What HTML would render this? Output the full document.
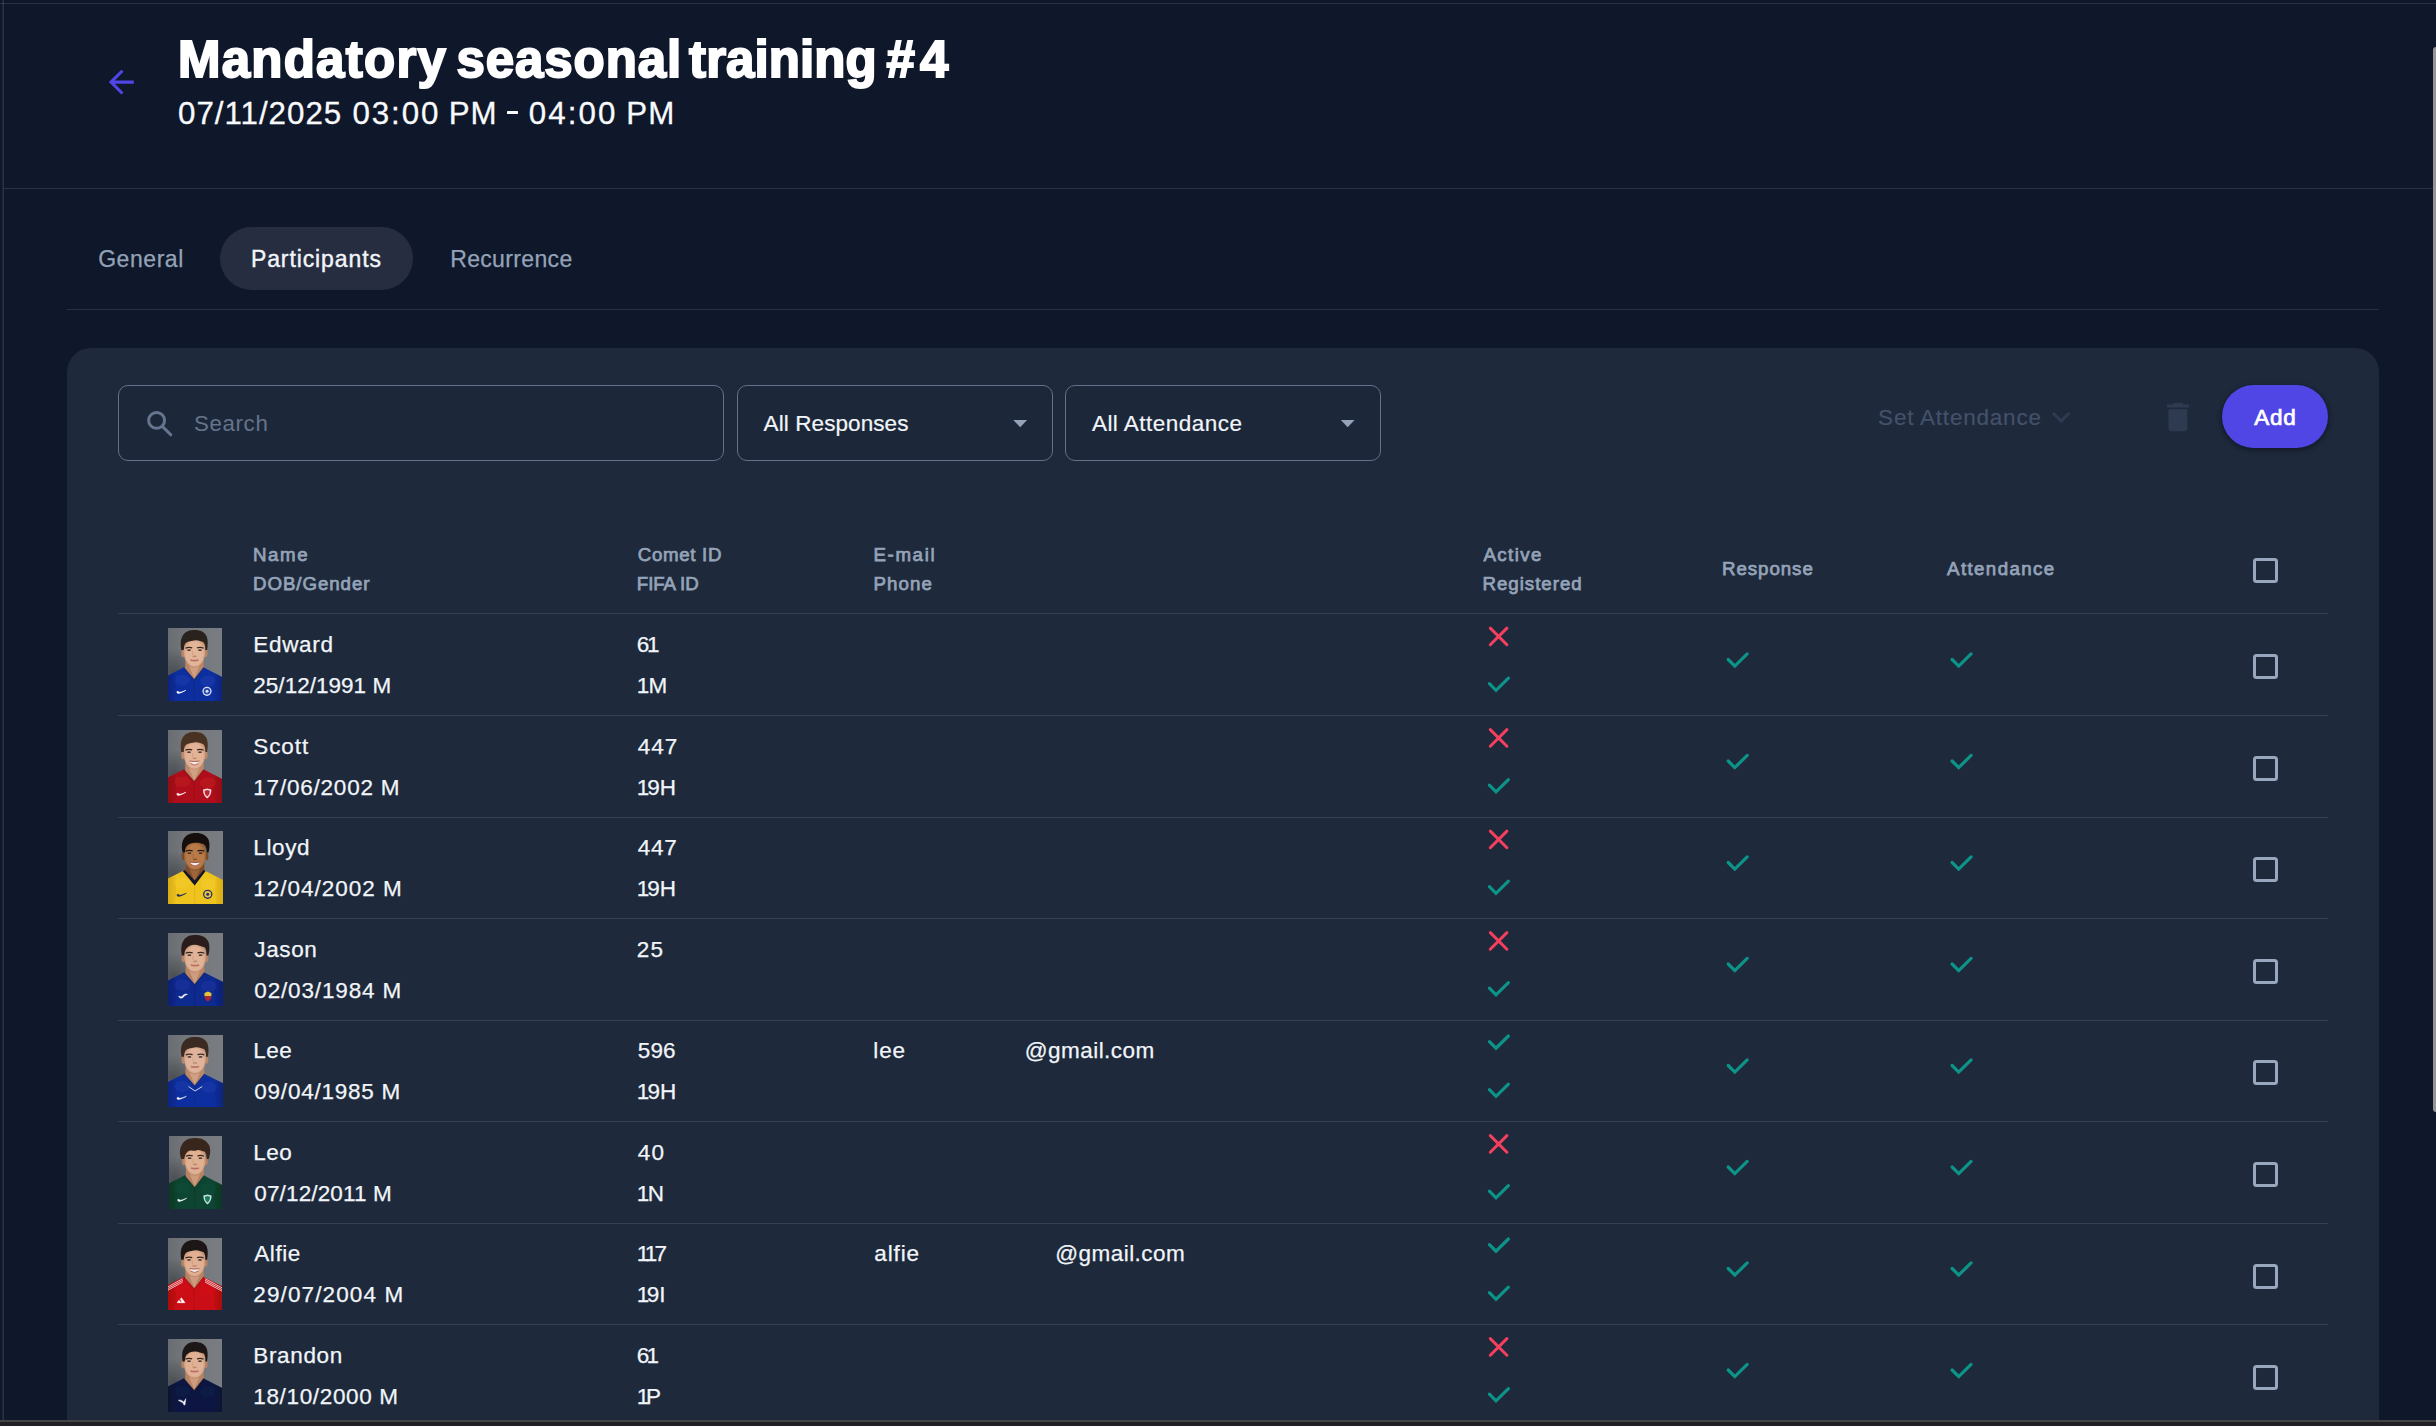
<!DOCTYPE html>
<html lang="en">
<head>
<meta charset="utf-8">
<title>Mandatory seasonal training #4</title>
<style>

*{box-sizing:border-box;margin:0;padding:0}
html,body{width:2436px;height:1426px;overflow:hidden;background:#0f172a}
body{position:relative;font-family:"Liberation Sans",sans-serif;color:#f1f5f9}
.abs,.t,svg.i{position:absolute}
.t{white-space:pre;line-height:1;display:block}
.ln{position:absolute;height:1px;background:#334155}
.frame-top{left:0;top:3px;width:2436px;height:1px;background:rgba(255,255,255,.115)}
.frame-left{left:2px;top:0;width:2px;height:1426px;background:linear-gradient(90deg,rgba(255,255,255,.06) 0,rgba(255,255,255,.06) 50%,rgba(255,255,255,.115) 50%)}
.hdr-line{left:4px;top:188px;width:2429px;height:1px;background:#2a3145}
.tab-line{left:67px;top:309px;width:2312px;height:1px;background:#2a3145}
.pill{left:220px;top:227px;width:193px;height:63px;border-radius:32px;background:#272d40}
.card{left:67px;top:348px;width:2312px;height:1100px;border-radius:24px;background:#1e293b}
.field{height:76px;top:385px;border:1px solid #62728b;border-radius:10px;background:#1c2739}
.btn{left:2222px;top:385px;width:106px;height:63px;border-radius:31.5px;background:#4f46e5;box-shadow:0 2px 4px rgba(8,12,24,.42),0 1px 7px rgba(8,12,24,.2)}
.cb{width:25px;height:25px;left:2253px;border:3px solid #98a6be;border-radius:3.5px}
.av{left:168px;width:54px;height:73px;overflow:hidden}
.bottombar{left:0;top:1420px;width:2436px;height:6px;background:#201f24;border-top:2px solid #454447}
.sb{left:2433px;top:47px;width:4px;height:1065px;background:#959595;border-radius:3px 0 0 3px}

</style>
</head>
<body>
<!-- static shapes: frame lines, card, fields, row rules, checkboxes, icons, avatars -->
<div class="abs frame-top"></div><div class="abs frame-left"></div>
<div class="abs hdr-line"></div><div class="abs tab-line"></div>
<div class="abs" style="left:507px;top:111.2px;width:11px;height:2.6px;background:#f8fafc;border-radius:.5px"></div>
<div class="abs pill"></div>
<div class="abs card"></div>
<div class="abs field" style="left:118px;width:606px"></div>
<div class="abs field" style="left:737px;width:316px"></div>
<div class="abs field" style="left:1065px;width:316px"></div>
<div class="abs btn"></div>
<div class="ln" style="left:118px;top:613px;width:2210px"></div>
<div class="ln" style="left:118px;top:715px;width:2210px"></div>
<div class="ln" style="left:118px;top:817px;width:2210px"></div>
<div class="ln" style="left:118px;top:918px;width:2210px"></div>
<div class="ln" style="left:118px;top:1020px;width:2210px"></div>
<div class="ln" style="left:118px;top:1121px;width:2210px"></div>
<div class="ln" style="left:118px;top:1223px;width:2210px"></div>
<div class="ln" style="left:118px;top:1324px;width:2210px"></div>
<div class="abs cb" style="top:558px"></div>
<div class="abs cb" style="top:654px"></div>
<div class="abs cb" style="top:756px"></div>
<div class="abs cb" style="top:857px"></div>
<div class="abs cb" style="top:959px"></div>
<div class="abs cb" style="top:1060px"></div>
<div class="abs cb" style="top:1162px"></div>
<div class="abs cb" style="top:1264px"></div>
<div class="abs cb" style="top:1365px"></div>
<svg class="i" style="left:0;top:0" width="2436" height="1426" viewBox="0 0 2436 1426"><g transform="translate(102.6 63.4) scale(1.56)" fill="#4f46e5"><path d="M20 11H7.83l5.59-5.59L12 4l-8 8 8 8 1.41-1.41L7.83 13H20v-2z"/></g><g fill="none" stroke="#66758f" stroke-width="3" stroke-linecap="round"><circle cx="156.6" cy="420.4" r="7.95"/><path d="M162.6 426.6L170.8 434.8"/></g><path d="M1013.3 420h13.8l-6.9 7.3z" fill="#94a3b8"/><path d="M1340.8 420h13.8l-6.9 7.3z" fill="#94a3b8"/><g transform="translate(2042.45 398.3) scale(1.56)" fill="#2e3a50"><path d="M16.59 8.59L12 13.17 7.41 8.59 6 10l6 6 6-6z"/></g><g transform="translate(2159.05 398.15) scale(1.572)" fill="#2e3a50"><path d="M6 19c0 1.1.9 2 2 2h8c1.1 0 2-.9 2-2V7H6v12zM19 4h-3.5l-1-1h-5l-1 1H5v2h14V4z"/></g><path d="M1490.3 628.1L1506.9 644.7M1506.9 628.1L1490.3 644.7" fill="none" stroke="#f43f5e" stroke-width="3" stroke-linecap="round"/><polyline points="1489.40,683.70 1496.00,690.30 1508.40,678.10" fill="none" stroke="#0d9488" stroke-width="3.2" stroke-linecap="round" stroke-linejoin="miter"/><polyline points="1728.20,659.50 1734.80,666.10 1747.20,653.90" fill="none" stroke="#0d9488" stroke-width="3.2" stroke-linecap="round" stroke-linejoin="miter"/><polyline points="1952.10,659.50 1958.70,666.10 1971.10,653.90" fill="none" stroke="#0d9488" stroke-width="3.2" stroke-linecap="round" stroke-linejoin="miter"/><path d="M1490.3 729.6L1506.9 746.2M1506.9 729.6L1490.3 746.2" fill="none" stroke="#f43f5e" stroke-width="3" stroke-linecap="round"/><polyline points="1489.40,785.20 1496.00,791.80 1508.40,779.60" fill="none" stroke="#0d9488" stroke-width="3.2" stroke-linecap="round" stroke-linejoin="miter"/><polyline points="1728.20,761.00 1734.80,767.60 1747.20,755.40" fill="none" stroke="#0d9488" stroke-width="3.2" stroke-linecap="round" stroke-linejoin="miter"/><polyline points="1952.10,761.00 1958.70,767.60 1971.10,755.40" fill="none" stroke="#0d9488" stroke-width="3.2" stroke-linecap="round" stroke-linejoin="miter"/><path d="M1490.3 831.1L1506.9 847.7M1506.9 831.1L1490.3 847.7" fill="none" stroke="#f43f5e" stroke-width="3" stroke-linecap="round"/><polyline points="1489.40,886.70 1496.00,893.30 1508.40,881.10" fill="none" stroke="#0d9488" stroke-width="3.2" stroke-linecap="round" stroke-linejoin="miter"/><polyline points="1728.20,862.50 1734.80,869.10 1747.20,856.90" fill="none" stroke="#0d9488" stroke-width="3.2" stroke-linecap="round" stroke-linejoin="miter"/><polyline points="1952.10,862.50 1958.70,869.10 1971.10,856.90" fill="none" stroke="#0d9488" stroke-width="3.2" stroke-linecap="round" stroke-linejoin="miter"/><path d="M1490.3 932.6L1506.9 949.2M1506.9 932.6L1490.3 949.2" fill="none" stroke="#f43f5e" stroke-width="3" stroke-linecap="round"/><polyline points="1489.40,988.20 1496.00,994.80 1508.40,982.60" fill="none" stroke="#0d9488" stroke-width="3.2" stroke-linecap="round" stroke-linejoin="miter"/><polyline points="1728.20,964.00 1734.80,970.60 1747.20,958.40" fill="none" stroke="#0d9488" stroke-width="3.2" stroke-linecap="round" stroke-linejoin="miter"/><polyline points="1952.10,964.00 1958.70,970.60 1971.10,958.40" fill="none" stroke="#0d9488" stroke-width="3.2" stroke-linecap="round" stroke-linejoin="miter"/><polyline points="1489.40,1041.60 1496.00,1048.20 1508.40,1036.00" fill="none" stroke="#0d9488" stroke-width="3.2" stroke-linecap="round" stroke-linejoin="miter"/><polyline points="1489.40,1089.70 1496.00,1096.30 1508.40,1084.10" fill="none" stroke="#0d9488" stroke-width="3.2" stroke-linecap="round" stroke-linejoin="miter"/><polyline points="1728.20,1065.50 1734.80,1072.10 1747.20,1059.90" fill="none" stroke="#0d9488" stroke-width="3.2" stroke-linecap="round" stroke-linejoin="miter"/><polyline points="1952.10,1065.50 1958.70,1072.10 1971.10,1059.90" fill="none" stroke="#0d9488" stroke-width="3.2" stroke-linecap="round" stroke-linejoin="miter"/><path d="M1490.3 1135.6L1506.9 1152.2M1506.9 1135.6L1490.3 1152.2" fill="none" stroke="#f43f5e" stroke-width="3" stroke-linecap="round"/><polyline points="1489.40,1191.20 1496.00,1197.80 1508.40,1185.60" fill="none" stroke="#0d9488" stroke-width="3.2" stroke-linecap="round" stroke-linejoin="miter"/><polyline points="1728.20,1167.00 1734.80,1173.60 1747.20,1161.40" fill="none" stroke="#0d9488" stroke-width="3.2" stroke-linecap="round" stroke-linejoin="miter"/><polyline points="1952.10,1167.00 1958.70,1173.60 1971.10,1161.40" fill="none" stroke="#0d9488" stroke-width="3.2" stroke-linecap="round" stroke-linejoin="miter"/><polyline points="1489.40,1244.60 1496.00,1251.20 1508.40,1239.00" fill="none" stroke="#0d9488" stroke-width="3.2" stroke-linecap="round" stroke-linejoin="miter"/><polyline points="1489.40,1292.70 1496.00,1299.30 1508.40,1287.10" fill="none" stroke="#0d9488" stroke-width="3.2" stroke-linecap="round" stroke-linejoin="miter"/><polyline points="1728.20,1268.50 1734.80,1275.10 1747.20,1262.90" fill="none" stroke="#0d9488" stroke-width="3.2" stroke-linecap="round" stroke-linejoin="miter"/><polyline points="1952.10,1268.50 1958.70,1275.10 1971.10,1262.90" fill="none" stroke="#0d9488" stroke-width="3.2" stroke-linecap="round" stroke-linejoin="miter"/><path d="M1490.3 1338.6L1506.9 1355.2M1506.9 1338.6L1490.3 1355.2" fill="none" stroke="#f43f5e" stroke-width="3" stroke-linecap="round"/><polyline points="1489.40,1394.20 1496.00,1400.80 1508.40,1388.60" fill="none" stroke="#0d9488" stroke-width="3.2" stroke-linecap="round" stroke-linejoin="miter"/><polyline points="1728.20,1370.00 1734.80,1376.60 1747.20,1364.40" fill="none" stroke="#0d9488" stroke-width="3.2" stroke-linecap="round" stroke-linejoin="miter"/><polyline points="1952.10,1370.00 1958.70,1376.60 1971.10,1364.40" fill="none" stroke="#0d9488" stroke-width="3.2" stroke-linecap="round" stroke-linejoin="miter"/></svg>
<div class="abs av" style="left:168px;top:628px;width:54px;height:73px"><svg width="54" height="73" viewBox="0 0 54 73" preserveAspectRatio="none" style="display:block"><defs><linearGradient id="bg0" x1="0" y1="0" x2="1" y2="0"><stop offset="0" stop-color="#686b70"/><stop offset=".3" stop-color="#727579"/><stop offset="1" stop-color="#7a7d82"/></linearGradient><radialGradient id="sd0" gradientUnits="userSpaceOnUse" cx="6" cy="44" r="24"><stop offset="0" stop-color="#3c3f43" stop-opacity=".7"/><stop offset=".55" stop-color="#3c3f43" stop-opacity=".32"/><stop offset="1" stop-color="#3c3f43" stop-opacity="0"/></radialGradient><radialGradient id="sk0" cx=".5" cy=".55" r=".62"><stop offset="0" stop-color="#e2b498"/><stop offset=".62" stop-color="#e2b498"/><stop offset="1" stop-color="#b98567"/></radialGradient><linearGradient id="sh0" x1="0" y1="0" x2="1" y2="0"><stop offset="0" stop-color="#081f72"/><stop offset=".16" stop-color="#0d2f9e"/><stop offset=".5" stop-color="#0d2f9e"/><stop offset=".84" stop-color="#0d2f9e"/><stop offset="1" stop-color="#081f72"/></linearGradient><filter id="bl0" x="-10%" y="-10%" width="120%" height="120%"><feGaussianBlur stdDeviation=".7"/></filter><filter id="bs0" x="-20%" y="-20%" width="140%" height="140%"><feGaussianBlur stdDeviation=".4"/></filter></defs><rect x="-2" y="-2" width="58" height="77" fill="url(#bg0)"/><rect x="-2" y="14" width="34" height="40" fill="url(#sd0)"/><g filter="url(#bl0)"><path d="M17.4 31 L17.2 41 L26.2 52.2 L35.8 41 L35.6 31z" fill="#b98567"/><path d="M21 38 L26.3 50.5 L31.6 38z" fill="#e2b498" opacity=".55"/><path d="M-4 49.6 L15.6 39.5 L26.2 51.8 L35.8 39.5 L58 51 L58 80 L-4 80z" fill="url(#sh0)"/><path d="M-4 49.6 L6.5 44.4 C8.5 52 8.5 62 5.5 80 L-4 80z" fill="#081f72" opacity=".28"/><path d="M58 51 L47.5 45.6 C45.5 53 45.8 63 48.6 80 L58 80z" fill="#081f72" opacity=".28"/><ellipse cx="14" cy="52" rx="8" ry="5.5" fill="#2246bd" opacity=".28"/><ellipse cx="40" cy="53" rx="8" ry="5.5" fill="#2246bd" opacity=".28"/><path d="M26.2 52 L26.4 80" stroke="#081f72" stroke-width=".9" opacity=".5"/><path d="M15.6 39.5 L26.2 51.8 L35.8 39.5" fill="none" stroke="#081f72" stroke-width="1.1" opacity=".7"/><ellipse cx="14.9" cy="25.2" rx="1.6" ry="4" fill="#b98567"/><ellipse cx="38" cy="25.2" rx="1.6" ry="4" fill="#b98567"/><path d="M15.8 20 C15.6 12 20 9.3 26.5 9.3 C33 9.3 37.4 12 37.2 20 L37.2 25.4 C37 30 35 34.2 31.6 37.2 C29 39.5 24 39.5 21.4 37.2 C18 34.2 16 30 15.8 25.4 Z" fill="url(#sk0)"/><path d="M13.3 22 C12.4 17 12.4 11 14.8 7.5 C17.8 3 22.5 1.9 27 2.1 C32 2.1 37 4 38.9 9 C40.2 13 39.8 18 39.1 22 L37.3 22 C37.6 18.5 37 15.8 35.4 14.2 C32.2 13.4 30 11.6 26 12.6 C22 13.3 19.2 13.6 17.3 15.6 C16.1 17.6 15.9 19.6 15.7 22 Z" fill="#2b211d"/></g><g filter="url(#bs0)"><path d="M17.4 20.3 Q20.6 18.6 24.2 19.9 M29 19.9 Q32.6 18.6 35.6 20.3" stroke="#241813" stroke-width="1.25" fill="none" opacity=".9"/><ellipse cx="21" cy="22.2" rx="1.9" ry=".9" fill="#2c201c" opacity=".8"/><ellipse cx="32" cy="22.2" rx="1.9" ry=".9" fill="#2c201c" opacity=".8"/><ellipse cx="26.6" cy="28.3" rx="2.3" ry=".85" fill="#b98567" opacity=".85"/><path d="M24.7 23 L24.5 27" stroke="#b98567" stroke-width="1.1" opacity=".35"/><path d="M22.4 32 Q26.5 33.2 30.6 32" stroke="#b2655f" stroke-width="1.7" fill="none" opacity=".9"/><path d="M20.5 37.4 Q26.5 41.2 32.5 37.4" stroke="#b98567" stroke-width="1" fill="none" opacity=".7"/><path d="M8.9 63.6 C8.6 66.4 11.5 65.9 18 62.2 C12.8 64.4 10.6 64.8 10.2 63.2z" fill="#ffffff" stroke="#ffffff" stroke-width=".5"/><circle cx="39" cy="63.3" r="4.6" fill="#d9e2f2"/><circle cx="39" cy="63.3" r="3.3" fill="#2546ad"/><circle cx="39" cy="63.3" r="1.5" fill="#d9e2f2"/></g></svg></div>
<div class="abs av" style="left:168px;top:730px;width:54px;height:73px"><svg width="54" height="73" viewBox="0 0 54 73" preserveAspectRatio="none" style="display:block"><defs><linearGradient id="bg1" x1="0" y1="0" x2="1" y2="0"><stop offset="0" stop-color="#686b70"/><stop offset=".3" stop-color="#727579"/><stop offset="1" stop-color="#7a7d82"/></linearGradient><radialGradient id="sd1" gradientUnits="userSpaceOnUse" cx="6" cy="44" r="24"><stop offset="0" stop-color="#3c3f43" stop-opacity=".7"/><stop offset=".55" stop-color="#3c3f43" stop-opacity=".32"/><stop offset="1" stop-color="#3c3f43" stop-opacity="0"/></radialGradient><radialGradient id="sk1" cx=".5" cy=".55" r=".62"><stop offset="0" stop-color="#e4b397"/><stop offset=".62" stop-color="#e4b397"/><stop offset="1" stop-color="#bd876a"/></radialGradient><linearGradient id="sh1" x1="0" y1="0" x2="1" y2="0"><stop offset="0" stop-color="#860b13"/><stop offset=".16" stop-color="#b0101a"/><stop offset=".5" stop-color="#b0101a"/><stop offset=".84" stop-color="#b0101a"/><stop offset="1" stop-color="#860b13"/></linearGradient><filter id="bl1" x="-10%" y="-10%" width="120%" height="120%"><feGaussianBlur stdDeviation=".7"/></filter><filter id="bs1" x="-20%" y="-20%" width="140%" height="140%"><feGaussianBlur stdDeviation=".4"/></filter></defs><rect x="-2" y="-2" width="58" height="77" fill="url(#bg1)"/><rect x="-2" y="14" width="34" height="40" fill="url(#sd1)"/><g filter="url(#bl1)"><path d="M17.4 31 L17.2 41 L26.2 52.2 L35.8 41 L35.6 31z" fill="#bd876a"/><path d="M21 38 L26.3 50.5 L31.6 38z" fill="#e4b397" opacity=".55"/><path d="M-4 49.6 L15.6 39.5 L26.2 51.8 L35.8 39.5 L58 51 L58 80 L-4 80z" fill="url(#sh1)"/><path d="M-4 49.6 L6.5 44.4 C8.5 52 8.5 62 5.5 80 L-4 80z" fill="#860b13" opacity=".28"/><path d="M58 51 L47.5 45.6 C45.5 53 45.8 63 48.6 80 L58 80z" fill="#860b13" opacity=".28"/><ellipse cx="14" cy="52" rx="8" ry="5.5" fill="#c91f27" opacity=".28"/><ellipse cx="40" cy="53" rx="8" ry="5.5" fill="#c91f27" opacity=".28"/><path d="M26.2 52 L26.4 80" stroke="#860b13" stroke-width=".9" opacity=".5"/><path d="M15.6 39.5 L26.2 51.8 L35.8 39.5" fill="none" stroke="#860b13" stroke-width="1.1" opacity=".7"/><ellipse cx="14.9" cy="25.2" rx="1.6" ry="4" fill="#bd876a"/><ellipse cx="38" cy="25.2" rx="1.6" ry="4" fill="#bd876a"/><path d="M15.8 20 C15.6 12 20 9.3 26.5 9.3 C33 9.3 37.4 12 37.2 20 L37.2 25.4 C37 30 35 34.2 31.6 37.2 C29 39.5 24 39.5 21.4 37.2 C18 34.2 16 30 15.8 25.4 Z" fill="url(#sk1)"/><path d="M13.3 22 C12.4 17 12.4 11 14.8 7.5 C17.8 3 22.5 1.9 27 2.1 C32 2.1 37 4 38.9 9 C40.2 13 39.8 18 39.1 22 L37.3 22 C37.6 18.5 37 15.8 35.4 14.2 C32.2 13.4 30 11.6 26 12.6 C22 13.3 19.2 13.6 17.3 15.6 C16.1 17.6 15.9 19.6 15.7 22 Z" fill="#4a3224"/></g><g filter="url(#bs1)"><path d="M17.4 20.3 Q20.6 18.6 24.2 19.9 M29 19.9 Q32.6 18.6 35.6 20.3" stroke="#241813" stroke-width="1.25" fill="none" opacity=".9"/><ellipse cx="21" cy="22.2" rx="1.9" ry=".9" fill="#2c201c" opacity=".8"/><ellipse cx="32" cy="22.2" rx="1.9" ry=".9" fill="#2c201c" opacity=".8"/><ellipse cx="26.6" cy="28.3" rx="2.3" ry=".85" fill="#bd876a" opacity=".85"/><path d="M24.7 23 L24.5 27" stroke="#bd876a" stroke-width="1.1" opacity=".35"/><path d="M21.9 31.2 Q26.5 32.2 31.1 31.2 Q29.4 35 26.5 35 Q23.6 35 21.9 31.2z" fill="#f4ecea"/><path d="M21.6 31 Q26.5 32.1 31.4 31" stroke="#8e4a44" stroke-width=".8" fill="none"/><path d="M22.6 33.6 Q26.5 36.4 30.4 33.6" stroke="#a8605a" stroke-width=".9" fill="none"/><path d="M20.5 37.4 Q26.5 41.2 32.5 37.4" stroke="#bd876a" stroke-width="1" fill="none" opacity=".7"/><path d="M8.9 63.6 C8.6 66.4 11.5 65.9 18 62.2 C12.8 64.4 10.6 64.8 10.2 63.2z" fill="#ffffff" stroke="#ffffff" stroke-width=".5"/><path d="M35 59.6 L39.2 58.4 L43.4 59.6 C43.4 63.8 42 66.6 39.2 68.4 C36.4 66.6 35 63.8 35 59.6z" fill="#f0dfe0"/><path d="M36.6 60.8 L39.2 60 L41.8 60.8 C41.8 63.6 41 65.4 39.2 66.6 C37.4 65.4 36.6 63.6 36.6 60.8z" fill="#c2262e"/></g></svg></div>
<div class="abs av" style="left:168px;top:831px;width:55px;height:73px"><svg width="55" height="73" viewBox="0 0 54 73" preserveAspectRatio="none" style="display:block"><defs><linearGradient id="bg2" x1="0" y1="0" x2="1" y2="0"><stop offset="0" stop-color="#686b70"/><stop offset=".3" stop-color="#727579"/><stop offset="1" stop-color="#7a7d82"/></linearGradient><radialGradient id="sd2" gradientUnits="userSpaceOnUse" cx="6" cy="44" r="24"><stop offset="0" stop-color="#3c3f43" stop-opacity=".7"/><stop offset=".55" stop-color="#3c3f43" stop-opacity=".32"/><stop offset="1" stop-color="#3c3f43" stop-opacity="0"/></radialGradient><radialGradient id="sk2" cx=".5" cy=".55" r=".62"><stop offset="0" stop-color="#b97a48"/><stop offset=".62" stop-color="#b97a48"/><stop offset="1" stop-color="#7e4c2a"/></radialGradient><linearGradient id="sh2" x1="0" y1="0" x2="1" y2="0"><stop offset="0" stop-color="#cfa012"/><stop offset=".16" stop-color="#efc41f"/><stop offset=".5" stop-color="#efc41f"/><stop offset=".84" stop-color="#efc41f"/><stop offset="1" stop-color="#cfa012"/></linearGradient><filter id="bl2" x="-10%" y="-10%" width="120%" height="120%"><feGaussianBlur stdDeviation=".7"/></filter><filter id="bs2" x="-20%" y="-20%" width="140%" height="140%"><feGaussianBlur stdDeviation=".4"/></filter></defs><rect x="-2" y="-2" width="58" height="77" fill="url(#bg2)"/><rect x="-2" y="14" width="34" height="40" fill="url(#sd2)"/><g filter="url(#bl2)"><path d="M17.4 31 L17.2 41 L26.2 52.2 L35.8 41 L35.6 31z" fill="#7e4c2a"/><path d="M21 38 L26.3 50.5 L31.6 38z" fill="#b97a48" opacity=".55"/><path d="M-4 49.6 L15.6 39.5 L26.2 51.8 L35.8 39.5 L58 51 L58 80 L-4 80z" fill="url(#sh2)"/><path d="M-4 49.6 L6.5 44.4 C8.5 52 8.5 62 5.5 80 L-4 80z" fill="#cfa012" opacity=".28"/><path d="M58 51 L47.5 45.6 C45.5 53 45.8 63 48.6 80 L58 80z" fill="#cfa012" opacity=".28"/><ellipse cx="14" cy="52" rx="8" ry="5.5" fill="#f7d540" opacity=".28"/><ellipse cx="40" cy="53" rx="8" ry="5.5" fill="#f7d540" opacity=".28"/><path d="M26.2 52 L26.4 80" stroke="#cfa012" stroke-width=".9" opacity=".5"/><path d="M14.4 39.9 L26.2 54.4 L37 39.9 L34.9 38.9 L26.2 49.6 L16.6 38.9z" fill="#14182a"/><ellipse cx="14.9" cy="25.2" rx="1.6" ry="4" fill="#7e4c2a"/><ellipse cx="38" cy="25.2" rx="1.6" ry="4" fill="#7e4c2a"/><path d="M15.8 20 C15.6 12 20 9.3 26.5 9.3 C33 9.3 37.4 12 37.2 20 L37.2 25.4 C37 30 35 34.2 31.6 37.2 C29 39.5 24 39.5 21.4 37.2 C18 34.2 16 30 15.8 25.4 Z" fill="url(#sk2)"/><path d="M14.4 21.5 C13.2 17 13.2 11 15.8 7.2 C18.6 3 23.4 1.8 28 1.9 C33 1.9 38 4 39.9 9 C41.2 13 40.8 17.6 39.8 21.5 L38 21.5 C38 18.4 37.4 15.6 35.6 13.6 C32.6 12 29.6 11.6 26.8 11.8 C23.4 12 20.4 12.8 18.6 14.8 C16.8 16.8 16.8 19 16.6 21.5 Z" fill="#14100e"/></g><g filter="url(#bs2)"><path d="M17.4 20.3 Q20.6 18.6 24.2 19.9 M29 19.9 Q32.6 18.6 35.6 20.3" stroke="#120c09" stroke-width="1.25" fill="none" opacity=".9"/><ellipse cx="21" cy="22.2" rx="1.9" ry=".9" fill="#2c201c" opacity=".8"/><ellipse cx="32" cy="22.2" rx="1.9" ry=".9" fill="#2c201c" opacity=".8"/><ellipse cx="26.6" cy="28.3" rx="2.3" ry=".85" fill="#7e4c2a" opacity=".85"/><path d="M24.7 23 L24.5 27" stroke="#7e4c2a" stroke-width="1.1" opacity=".35"/><path d="M21.9 31.2 Q26.5 32.2 31.1 31.2 Q29.4 35 26.5 35 Q23.6 35 21.9 31.2z" fill="#f4ecea"/><path d="M21.6 31 Q26.5 32.1 31.4 31" stroke="#8e4a44" stroke-width=".8" fill="none"/><path d="M22.6 33.6 Q26.5 36.4 30.4 33.6" stroke="#a8605a" stroke-width=".9" fill="none"/><path d="M20.5 37.4 Q26.5 41.2 32.5 37.4" stroke="#7e4c2a" stroke-width="1" fill="none" opacity=".7"/><path d="M8.9 63.6 C8.6 66.4 11.5 65.9 18 62.2 C12.8 64.4 10.6 64.8 10.2 63.2z" fill="#1d2a5a" stroke="#1d2a5a" stroke-width=".5"/><circle cx="39" cy="63.3" r="4.6" fill="#27306a"/><circle cx="39" cy="63.3" r="3.3" fill="#e9c83a"/><circle cx="39" cy="63.3" r="1.5" fill="#27306a"/></g></svg></div>
<div class="abs av" style="left:168px;top:933px;width:55px;height:73px"><svg width="55" height="73" viewBox="0 0 54 73" preserveAspectRatio="none" style="display:block"><defs><linearGradient id="bg3" x1="0" y1="0" x2="1" y2="0"><stop offset="0" stop-color="#686b70"/><stop offset=".3" stop-color="#727579"/><stop offset="1" stop-color="#7a7d82"/></linearGradient><radialGradient id="sd3" gradientUnits="userSpaceOnUse" cx="6" cy="44" r="24"><stop offset="0" stop-color="#3c3f43" stop-opacity=".7"/><stop offset=".55" stop-color="#3c3f43" stop-opacity=".32"/><stop offset="1" stop-color="#3c3f43" stop-opacity="0"/></radialGradient><radialGradient id="sk3" cx=".5" cy=".55" r=".62"><stop offset="0" stop-color="#e0b296"/><stop offset=".62" stop-color="#e0b296"/><stop offset="1" stop-color="#b78365"/></radialGradient><linearGradient id="sh3" x1="0" y1="0" x2="1" y2="0"><stop offset="0" stop-color="#0a1c6b"/><stop offset=".16" stop-color="#11298f"/><stop offset=".5" stop-color="#11298f"/><stop offset=".84" stop-color="#11298f"/><stop offset="1" stop-color="#0a1c6b"/></linearGradient><filter id="bl3" x="-10%" y="-10%" width="120%" height="120%"><feGaussianBlur stdDeviation=".7"/></filter><filter id="bs3" x="-20%" y="-20%" width="140%" height="140%"><feGaussianBlur stdDeviation=".4"/></filter></defs><rect x="-2" y="-2" width="58" height="77" fill="url(#bg3)"/><rect x="-2" y="14" width="34" height="40" fill="url(#sd3)"/><g filter="url(#bl3)"><path d="M17.4 31 L17.2 41 L26.2 52.2 L35.8 41 L35.6 31z" fill="#b78365"/><path d="M21 38 L26.3 50.5 L31.6 38z" fill="#e0b296" opacity=".55"/><path d="M-4 49.6 L15.6 39.5 L26.2 51.8 L35.8 39.5 L58 51 L58 80 L-4 80z" fill="url(#sh3)"/><path d="M-4 49.6 L6.5 44.4 C8.5 52 8.5 62 5.5 80 L-4 80z" fill="#0a1c6b" opacity=".28"/><path d="M58 51 L47.5 45.6 C45.5 53 45.8 63 48.6 80 L58 80z" fill="#0a1c6b" opacity=".28"/><ellipse cx="14" cy="52" rx="8" ry="5.5" fill="#1f3cab" opacity=".28"/><ellipse cx="40" cy="53" rx="8" ry="5.5" fill="#1f3cab" opacity=".28"/><path d="M26.2 52 L26.4 80" stroke="#0a1c6b" stroke-width=".9" opacity=".5"/><path d="M15.6 39.5 L26.2 51.8 L35.8 39.5" fill="none" stroke="#0a1c6b" stroke-width="1.1" opacity=".7"/><ellipse cx="14.9" cy="25.2" rx="1.6" ry="4" fill="#b78365"/><ellipse cx="38" cy="25.2" rx="1.6" ry="4" fill="#b78365"/><path d="M15.8 20 C15.6 12 20 9.3 26.5 9.3 C33 9.3 37.4 12 37.2 20 L37.2 25.4 C37 30 35 34.2 31.6 37.2 C29 39.5 24 39.5 21.4 37.2 C18 34.2 16 30 15.8 25.4 Z" fill="url(#sk3)"/><path d="M13.6 22.5 C12.6 17 12.8 11 15.4 7.3 C18.2 3 23 1.9 27.5 2.1 C32.8 2.1 38.2 4.4 40 9.6 C41.2 13.6 40.6 18.4 39.6 22.5 L37.8 22.5 C38 18.6 37.6 16 36.2 14.4 C33 14 30.4 12 27 11.8 C23 11.6 20 13.2 18 15.6 C16.4 17.6 16.2 19.8 16 22.5 Z" fill="#2a1f1b"/></g><g filter="url(#bs3)"><path d="M17.4 20.3 Q20.6 18.6 24.2 19.9 M29 19.9 Q32.6 18.6 35.6 20.3" stroke="#241813" stroke-width="1.25" fill="none" opacity=".9"/><ellipse cx="21" cy="22.2" rx="1.9" ry=".9" fill="#2c201c" opacity=".8"/><ellipse cx="32" cy="22.2" rx="1.9" ry=".9" fill="#2c201c" opacity=".8"/><ellipse cx="26.6" cy="28.3" rx="2.3" ry=".85" fill="#b78365" opacity=".85"/><path d="M24.7 23 L24.5 27" stroke="#b78365" stroke-width="1.1" opacity=".35"/><path d="M22.4 32 Q26.5 33.2 30.6 32" stroke="#b2655f" stroke-width="1.7" fill="none" opacity=".9"/><path d="M20.5 37.4 Q26.5 41.2 32.5 37.4" stroke="#b78365" stroke-width="1" fill="none" opacity=".7"/><path d="M10.6 63.2 C11.8 66.2 14.6 65.2 16 63 C16.8 61.8 18 61.6 19 61.4 C16.6 60.8 15.2 61.6 14.4 63 C13.6 64.2 12.4 64.4 10.6 63.2z" fill="#ffffff" stroke="#ffffff" stroke-width=".7"/><path d="M35.8 60 L39.2 58.6 L42.6 60 L42.6 63.2 L35.8 63.2z" fill="#e6c33a"/><path d="M35.8 63.2 L42.6 63.2 C42.4 65.6 41.2 67.4 39.2 68.4 C37.2 67.4 36 65.6 35.8 63.2z" fill="#b3202f"/></g></svg></div>
<div class="abs av" style="left:168px;top:1035px;width:55px;height:72px"><svg width="55" height="72" viewBox="0 0 54 73" preserveAspectRatio="none" style="display:block"><defs><linearGradient id="bg4" x1="0" y1="0" x2="1" y2="0"><stop offset="0" stop-color="#686b70"/><stop offset=".3" stop-color="#727579"/><stop offset="1" stop-color="#7a7d82"/></linearGradient><radialGradient id="sd4" gradientUnits="userSpaceOnUse" cx="6" cy="44" r="24"><stop offset="0" stop-color="#3c3f43" stop-opacity=".7"/><stop offset=".55" stop-color="#3c3f43" stop-opacity=".32"/><stop offset="1" stop-color="#3c3f43" stop-opacity="0"/></radialGradient><radialGradient id="sk4" cx=".5" cy=".55" r=".62"><stop offset="0" stop-color="#e0b49c"/><stop offset=".62" stop-color="#e0b49c"/><stop offset="1" stop-color="#b98869"/></radialGradient><linearGradient id="sh4" x1="0" y1="0" x2="1" y2="0"><stop offset="0" stop-color="#0a2176"/><stop offset=".16" stop-color="#102f9e"/><stop offset=".5" stop-color="#102f9e"/><stop offset=".84" stop-color="#102f9e"/><stop offset="1" stop-color="#0a2176"/></linearGradient><filter id="bl4" x="-10%" y="-10%" width="120%" height="120%"><feGaussianBlur stdDeviation=".7"/></filter><filter id="bs4" x="-20%" y="-20%" width="140%" height="140%"><feGaussianBlur stdDeviation=".4"/></filter></defs><rect x="-2" y="-2" width="58" height="77" fill="url(#bg4)"/><rect x="-2" y="14" width="34" height="40" fill="url(#sd4)"/><g filter="url(#bl4)"><path d="M17.4 31 L17.2 41 L26.2 52.2 L35.8 41 L35.6 31z" fill="#b98869"/><path d="M21 38 L26.3 50.5 L31.6 38z" fill="#e0b49c" opacity=".55"/><path d="M-4 49.6 L15.6 39.5 L26.2 51.8 L35.8 39.5 L58 51 L58 80 L-4 80z" fill="url(#sh4)"/><path d="M-4 49.6 L6.5 44.4 C8.5 52 8.5 62 5.5 80 L-4 80z" fill="#0a2176" opacity=".28"/><path d="M58 51 L47.5 45.6 C45.5 53 45.8 63 48.6 80 L58 80z" fill="#0a2176" opacity=".28"/><ellipse cx="14" cy="52" rx="8" ry="5.5" fill="#2145b8" opacity=".28"/><ellipse cx="40" cy="53" rx="8" ry="5.5" fill="#2145b8" opacity=".28"/><path d="M26.2 52 L26.4 80" stroke="#0a2176" stroke-width=".9" opacity=".5"/><path d="M15.6 39.5 L26.2 51.8 L35.8 39.5" fill="none" stroke="#0a2176" stroke-width="1.1" opacity=".7"/><path d="M20.2 52.2 L26.5 56.8 L33.6 52.2" fill="none" stroke="#e8ecf6" stroke-width=".9"/><ellipse cx="14.9" cy="25.2" rx="1.6" ry="4" fill="#b98869"/><ellipse cx="38" cy="25.2" rx="1.6" ry="4" fill="#b98869"/><path d="M15.8 20 C15.6 12 20 9.3 26.5 9.3 C33 9.3 37.4 12 37.2 20 L37.2 25.4 C37 30 35 34.2 31.6 37.2 C29 39.5 24 39.5 21.4 37.2 C18 34.2 16 30 15.8 25.4 Z" fill="url(#sk4)"/><path d="M13.3 22 C12.4 17 12.4 11 14.8 7.5 C17.8 3 22.5 1.9 27 2.1 C32 2.1 37 4 38.9 9 C40.2 13 39.8 18 39.1 22 L37.3 22 C37.6 18.5 37 15.8 35.4 14.2 C32.2 13.4 30 11.6 26 12.6 C22 13.3 19.2 13.6 17.3 15.6 C16.1 17.6 15.9 19.6 15.7 22 Z" fill="#3a2a20"/></g><g filter="url(#bs4)"><path d="M17.4 20.3 Q20.6 18.6 24.2 19.9 M29 19.9 Q32.6 18.6 35.6 20.3" stroke="#241813" stroke-width="1.25" fill="none" opacity=".9"/><ellipse cx="21" cy="22.2" rx="1.9" ry=".9" fill="#2c201c" opacity=".8"/><ellipse cx="32" cy="22.2" rx="1.9" ry=".9" fill="#2c201c" opacity=".8"/><ellipse cx="26.6" cy="28.3" rx="2.3" ry=".85" fill="#b98869" opacity=".85"/><path d="M24.7 23 L24.5 27" stroke="#b98869" stroke-width="1.1" opacity=".35"/><path d="M22.4 32 Q26.5 33.2 30.6 32" stroke="#b2655f" stroke-width="1.7" fill="none" opacity=".9"/><path d="M20.5 37.4 Q26.5 41.2 32.5 37.4" stroke="#b98869" stroke-width="1" fill="none" opacity=".7"/><path d="M8.9 63.6 C8.6 66.4 11.5 65.9 18 62.2 C12.8 64.4 10.6 64.8 10.2 63.2z" fill="#ffffff" stroke="#ffffff" stroke-width=".5"/></g></svg></div>
<div class="abs av" style="left:169px;top:1136px;width:53px;height:73px"><svg width="53" height="73" viewBox="0 0 54 73" preserveAspectRatio="none" style="display:block"><defs><linearGradient id="bg5" x1="0" y1="0" x2="1" y2="0"><stop offset="0" stop-color="#686b70"/><stop offset=".3" stop-color="#727579"/><stop offset="1" stop-color="#7a7d82"/></linearGradient><radialGradient id="sd5" gradientUnits="userSpaceOnUse" cx="6" cy="44" r="24"><stop offset="0" stop-color="#3c3f43" stop-opacity=".7"/><stop offset=".55" stop-color="#3c3f43" stop-opacity=".32"/><stop offset="1" stop-color="#3c3f43" stop-opacity="0"/></radialGradient><radialGradient id="sk5" cx=".5" cy=".55" r=".62"><stop offset="0" stop-color="#dfb092"/><stop offset=".62" stop-color="#dfb092"/><stop offset="1" stop-color="#b68263"/></radialGradient><linearGradient id="sh5" x1="0" y1="0" x2="1" y2="0"><stop offset="0" stop-color="#093322"/><stop offset=".16" stop-color="#0f4531"/><stop offset=".5" stop-color="#0f4531"/><stop offset=".84" stop-color="#0f4531"/><stop offset="1" stop-color="#093322"/></linearGradient><filter id="bl5" x="-10%" y="-10%" width="120%" height="120%"><feGaussianBlur stdDeviation=".7"/></filter><filter id="bs5" x="-20%" y="-20%" width="140%" height="140%"><feGaussianBlur stdDeviation=".4"/></filter></defs><rect x="-2" y="-2" width="58" height="77" fill="url(#bg5)"/><rect x="-2" y="14" width="34" height="40" fill="url(#sd5)"/><g filter="url(#bl5)"><path d="M17.4 31 L17.2 41 L26.2 52.2 L35.8 41 L35.6 31z" fill="#b68263"/><path d="M21 38 L26.3 50.5 L31.6 38z" fill="#dfb092" opacity=".55"/><path d="M-4 49.6 L15.6 39.5 L26.2 51.8 L35.8 39.5 L58 51 L58 80 L-4 80z" fill="url(#sh5)"/><path d="M-4 49.6 L6.5 44.4 C8.5 52 8.5 62 5.5 80 L-4 80z" fill="#093322" opacity=".28"/><path d="M58 51 L47.5 45.6 C45.5 53 45.8 63 48.6 80 L58 80z" fill="#093322" opacity=".28"/><ellipse cx="14" cy="52" rx="8" ry="5.5" fill="#185a41" opacity=".28"/><ellipse cx="40" cy="53" rx="8" ry="5.5" fill="#185a41" opacity=".28"/><path d="M26.2 52 L26.4 80" stroke="#093322" stroke-width=".9" opacity=".5"/><path d="M15.6 39.5 L26.2 51.8 L35.8 39.5" fill="none" stroke="#093322" stroke-width="1.1" opacity=".7"/><ellipse cx="14.9" cy="25.2" rx="1.6" ry="4" fill="#b68263"/><ellipse cx="38" cy="25.2" rx="1.6" ry="4" fill="#b68263"/><path d="M15.8 20 C15.6 12 20 9.3 26.5 9.3 C33 9.3 37.4 12 37.2 20 L37.2 25.4 C37 30 35 34.2 31.6 37.2 C29 39.5 24 39.5 21.4 37.2 C18 34.2 16 30 15.8 25.4 Z" fill="url(#sk5)"/><path d="M12.6 23 C10.8 19 10.4 13.4 12.8 9.2 C14.8 4.6 20 1.8 26.6 1.9 C33.6 1.9 39 4.6 41 9.6 C42.8 14 42 19.4 40.4 23 L38.4 23 C38.6 19.6 37.8 17 36.2 15.4 C33.6 15.6 31.6 13.4 28.4 14.2 C25.6 15.6 23.2 13.6 20.8 14.8 C18.4 15.6 17 17.6 16.4 19.6 C15.8 20.8 15.6 21.8 15.4 23 Z" fill="#38281d"/></g><g filter="url(#bs5)"><path d="M17.4 20.3 Q20.6 18.6 24.2 19.9 M29 19.9 Q32.6 18.6 35.6 20.3" stroke="#241813" stroke-width="1.25" fill="none" opacity=".9"/><ellipse cx="21" cy="22.2" rx="1.9" ry=".9" fill="#2c201c" opacity=".8"/><ellipse cx="32" cy="22.2" rx="1.9" ry=".9" fill="#2c201c" opacity=".8"/><ellipse cx="26.6" cy="28.3" rx="2.3" ry=".85" fill="#b68263" opacity=".85"/><path d="M24.7 23 L24.5 27" stroke="#b68263" stroke-width="1.1" opacity=".35"/><path d="M22.4 32 Q26.5 33.2 30.6 32" stroke="#b2655f" stroke-width="1.7" fill="none" opacity=".9"/><path d="M20.5 37.4 Q26.5 41.2 32.5 37.4" stroke="#b68263" stroke-width="1" fill="none" opacity=".7"/><path d="M8.9 63.6 C8.6 66.4 11.5 65.9 18 62.2 C12.8 64.4 10.6 64.8 10.2 63.2z" fill="#ffffff" stroke="#ffffff" stroke-width=".5"/><path d="M35 59.6 L39.2 58.4 L43.4 59.6 C43.4 63.8 42 66.6 39.2 68.4 C36.4 66.6 35 63.8 35 59.6z" fill="#c4e2da"/><path d="M36.6 60.8 L39.2 60 L41.8 60.8 C41.8 63.6 41 65.4 39.2 66.6 C37.4 65.4 36.6 63.6 36.6 60.8z" fill="#1e7c64"/></g></svg></div>
<div class="abs av" style="left:168px;top:1238px;width:54px;height:72px"><svg width="54" height="72" viewBox="0 0 54 73" preserveAspectRatio="none" style="display:block"><defs><linearGradient id="bg6" x1="0" y1="0" x2="1" y2="0"><stop offset="0" stop-color="#686b70"/><stop offset=".3" stop-color="#727579"/><stop offset="1" stop-color="#7a7d82"/></linearGradient><radialGradient id="sd6" gradientUnits="userSpaceOnUse" cx="6" cy="44" r="24"><stop offset="0" stop-color="#3c3f43" stop-opacity=".7"/><stop offset=".55" stop-color="#3c3f43" stop-opacity=".32"/><stop offset="1" stop-color="#3c3f43" stop-opacity="0"/></radialGradient><radialGradient id="sk6" cx=".5" cy=".55" r=".62"><stop offset="0" stop-color="#e1b093"/><stop offset=".62" stop-color="#e1b093"/><stop offset="1" stop-color="#b88264"/></radialGradient><linearGradient id="sh6" x1="0" y1="0" x2="1" y2="0"><stop offset="0" stop-color="#9c070d"/><stop offset=".16" stop-color="#ca0b13"/><stop offset=".5" stop-color="#ca0b13"/><stop offset=".84" stop-color="#ca0b13"/><stop offset="1" stop-color="#9c070d"/></linearGradient><filter id="bl6" x="-10%" y="-10%" width="120%" height="120%"><feGaussianBlur stdDeviation=".7"/></filter><filter id="bs6" x="-20%" y="-20%" width="140%" height="140%"><feGaussianBlur stdDeviation=".4"/></filter></defs><rect x="-2" y="-2" width="58" height="77" fill="url(#bg6)"/><rect x="-2" y="14" width="34" height="40" fill="url(#sd6)"/><g filter="url(#bl6)"><path d="M17.4 31 L17.2 41 L26.2 52.2 L35.8 41 L35.6 31z" fill="#b88264"/><path d="M21 38 L26.3 50.5 L31.6 38z" fill="#e1b093" opacity=".55"/><path d="M-4 49.6 L15.6 39.5 L26.2 51.8 L35.8 39.5 L58 51 L58 80 L-4 80z" fill="url(#sh6)"/><path d="M-4 49.6 L6.5 44.4 C8.5 52 8.5 62 5.5 80 L-4 80z" fill="#9c070d" opacity=".28"/><path d="M58 51 L47.5 45.6 C45.5 53 45.8 63 48.6 80 L58 80z" fill="#9c070d" opacity=".28"/><ellipse cx="14" cy="52" rx="8" ry="5.5" fill="#dc1a20" opacity=".28"/><ellipse cx="40" cy="53" rx="8" ry="5.5" fill="#dc1a20" opacity=".28"/><path d="M26.2 52 L26.4 80" stroke="#9c070d" stroke-width=".9" opacity=".5"/><path d="M15.6 39.5 L26.2 51.8 L35.8 39.5" fill="none" stroke="#9c070d" stroke-width="1.1" opacity=".7"/><path d="M-2 50.6 L14.8 41.2" stroke="#f3c4c6" stroke-width=".95"/><path d="M56 51.6 L37 41.2" stroke="#f3c4c6" stroke-width=".95"/><path d="M-2 52.3 L14.8 42.9" stroke="#f3c4c6" stroke-width=".95"/><path d="M56 53.3 L37 42.9" stroke="#f3c4c6" stroke-width=".95"/><path d="M-2 54.0 L14.8 44.6" stroke="#f3c4c6" stroke-width=".95"/><path d="M56 55.0 L37 44.6" stroke="#f3c4c6" stroke-width=".95"/><ellipse cx="14.9" cy="25.2" rx="1.6" ry="4" fill="#b88264"/><ellipse cx="38" cy="25.2" rx="1.6" ry="4" fill="#b88264"/><path d="M15.8 20 C15.6 12 20 9.3 26.5 9.3 C33 9.3 37.4 12 37.2 20 L37.2 25.4 C37 30 35 34.2 31.6 37.2 C29 39.5 24 39.5 21.4 37.2 C18 34.2 16 30 15.8 25.4 Z" fill="url(#sk6)"/><path d="M13.3 22 C12.4 17 12.4 11 14.8 7.5 C17.8 3 22.5 1.9 27 2.1 C32 2.1 37 4 38.9 9 C40.2 13 39.8 18 39.1 22 L37.3 22 C37.6 18.5 37 15.8 35.4 14.2 C32.2 13.4 30 11.6 26 12.6 C22 13.3 19.2 13.6 17.3 15.6 C16.1 17.6 15.9 19.6 15.7 22 Z" fill="#1e1714"/></g><g filter="url(#bs6)"><path d="M17.4 20.3 Q20.6 18.6 24.2 19.9 M29 19.9 Q32.6 18.6 35.6 20.3" stroke="#241813" stroke-width="1.25" fill="none" opacity=".9"/><ellipse cx="21" cy="22.2" rx="1.9" ry=".9" fill="#2c201c" opacity=".8"/><ellipse cx="32" cy="22.2" rx="1.9" ry=".9" fill="#2c201c" opacity=".8"/><ellipse cx="26.6" cy="28.3" rx="2.3" ry=".85" fill="#b88264" opacity=".85"/><path d="M24.7 23 L24.5 27" stroke="#b88264" stroke-width="1.1" opacity=".35"/><path d="M21.9 31.2 Q26.5 32.2 31.1 31.2 Q29.4 35 26.5 35 Q23.6 35 21.9 31.2z" fill="#f4ecea"/><path d="M21.6 31 Q26.5 32.1 31.4 31" stroke="#8e4a44" stroke-width=".8" fill="none"/><path d="M22.6 33.6 Q26.5 36.4 30.4 33.6" stroke="#a8605a" stroke-width=".9" fill="none"/><path d="M20.5 37.4 Q26.5 41.2 32.5 37.4" stroke="#b88264" stroke-width="1" fill="none" opacity=".7"/><path d="M9.2 65.6 L17 65.6 L13.4 60.6 L12.2 62.2 L14 65 L12.4 65 L11 63.2 L10 64.4z" fill="#ffffff" stroke="#ffffff" stroke-width=".5"/></g></svg></div>
<div class="abs av" style="left:168px;top:1339px;width:54px;height:73px"><svg width="54" height="73" viewBox="0 0 54 73" preserveAspectRatio="none" style="display:block"><defs><linearGradient id="bg7" x1="0" y1="0" x2="1" y2="0"><stop offset="0" stop-color="#686b70"/><stop offset=".3" stop-color="#727579"/><stop offset="1" stop-color="#7a7d82"/></linearGradient><radialGradient id="sd7" gradientUnits="userSpaceOnUse" cx="6" cy="44" r="24"><stop offset="0" stop-color="#3c3f43" stop-opacity=".7"/><stop offset=".55" stop-color="#3c3f43" stop-opacity=".32"/><stop offset="1" stop-color="#3c3f43" stop-opacity="0"/></radialGradient><radialGradient id="sk7" cx=".5" cy=".55" r=".62"><stop offset="0" stop-color="#e0b194"/><stop offset=".62" stop-color="#e0b194"/><stop offset="1" stop-color="#b78364"/></radialGradient><linearGradient id="sh7" x1="0" y1="0" x2="1" y2="0"><stop offset="0" stop-color="#070f2b"/><stop offset=".16" stop-color="#0b1942"/><stop offset=".5" stop-color="#0b1942"/><stop offset=".84" stop-color="#0b1942"/><stop offset="1" stop-color="#070f2b"/></linearGradient><filter id="bl7" x="-10%" y="-10%" width="120%" height="120%"><feGaussianBlur stdDeviation=".7"/></filter><filter id="bs7" x="-20%" y="-20%" width="140%" height="140%"><feGaussianBlur stdDeviation=".4"/></filter></defs><rect x="-2" y="-2" width="58" height="77" fill="url(#bg7)"/><rect x="-2" y="14" width="34" height="40" fill="url(#sd7)"/><g filter="url(#bl7)"><path d="M17.4 31 L17.2 41 L26.2 52.2 L35.8 41 L35.6 31z" fill="#b78364"/><path d="M21 38 L26.3 50.5 L31.6 38z" fill="#e0b194" opacity=".55"/><path d="M-4 49.6 L15.6 39.5 L26.2 51.8 L35.8 39.5 L58 51 L58 80 L-4 80z" fill="url(#sh7)"/><path d="M-4 49.6 L6.5 44.4 C8.5 52 8.5 62 5.5 80 L-4 80z" fill="#070f2b" opacity=".28"/><path d="M58 51 L47.5 45.6 C45.5 53 45.8 63 48.6 80 L58 80z" fill="#070f2b" opacity=".28"/><ellipse cx="14" cy="52" rx="8" ry="5.5" fill="#10214f" opacity=".28"/><ellipse cx="40" cy="53" rx="8" ry="5.5" fill="#10214f" opacity=".28"/><path d="M26.2 52 L26.4 80" stroke="#070f2b" stroke-width=".9" opacity=".5"/><path d="M15.6 39.5 L26.2 51.8 L35.8 39.5" fill="none" stroke="#070f2b" stroke-width="1.1" opacity=".7"/><ellipse cx="14.9" cy="25.2" rx="1.6" ry="4" fill="#b78364"/><ellipse cx="38" cy="25.2" rx="1.6" ry="4" fill="#b78364"/><path d="M15.8 20 C15.6 12 20 9.3 26.5 9.3 C33 9.3 37.4 12 37.2 20 L37.2 25.4 C37 30 35 34.2 31.6 37.2 C29 39.5 24 39.5 21.4 37.2 C18 34.2 16 30 15.8 25.4 Z" fill="url(#sk7)"/><path d="M14.6 22.5 C13.8 17.4 13.8 12 16.4 8.2 C19 4.2 23.4 3 27.4 3.1 C32 3.1 37.2 5 38.9 10 C40.1 14 39.7 18.6 39 22.5 L37.4 22.5 C37.6 18.8 37.2 16.2 35.8 14.6 C33 14 30.6 12.4 27.2 12.4 C23.4 12.4 20.4 13.6 18.6 15.8 C17.2 17.8 17 20 16.8 22.5 Z" fill="#1f1816"/></g><g filter="url(#bs7)"><path d="M17.4 20.3 Q20.6 18.6 24.2 19.9 M29 19.9 Q32.6 18.6 35.6 20.3" stroke="#241813" stroke-width="1.25" fill="none" opacity=".9"/><ellipse cx="21" cy="22.2" rx="1.9" ry=".9" fill="#2c201c" opacity=".8"/><ellipse cx="32" cy="22.2" rx="1.9" ry=".9" fill="#2c201c" opacity=".8"/><ellipse cx="26.6" cy="28.3" rx="2.3" ry=".85" fill="#b78364" opacity=".85"/><path d="M24.7 23 L24.5 27" stroke="#b78364" stroke-width="1.1" opacity=".35"/><path d="M22.4 32 Q26.5 33.2 30.6 32" stroke="#b2655f" stroke-width="1.7" fill="none" opacity=".9"/><path d="M20.5 37.4 Q26.5 41.2 32.5 37.4" stroke="#b78364" stroke-width="1" fill="none" opacity=".7"/><path d="M10.4 61 C12.4 60.6 14.4 61.6 15.6 63 C16.4 62 17.2 60.6 17.8 59.6 C17.8 61.8 17.4 63.6 17 66 L15.8 66 C15.8 64.6 14.6 63.4 12.8 62.8 C11.8 62.4 11 62 10.4 61z" fill="#eef0f4" stroke="#eef0f4" stroke-width=".4"/></g></svg></div>
<header aria-label="Event">
<span class="t" style="left:177.90px;top:33.73px;font-size:51px;color:#ffffff;font-weight:700;letter-spacing:1.263px;-webkit-text-stroke:2.0px #fff;">Mandatory</span>
<span class="t" style="left:456.50px;top:33.73px;font-size:51px;color:#ffffff;font-weight:700;letter-spacing:0.911px;-webkit-text-stroke:2.0px #fff;">seasonal</span>
<span class="t" style="left:689.10px;top:33.73px;font-size:51px;color:#ffffff;font-weight:700;letter-spacing:0.066px;-webkit-text-stroke:2.0px #fff;">training</span>
<span class="t" style="left:886.60px;top:33.73px;font-size:51px;color:#ffffff;font-weight:700;letter-spacing:5.036px;-webkit-text-stroke:2.0px #fff;">#4</span>
<span class="t" style="left:178.00px;top:98.30px;font-size:31.3px;color:#f8fafc;letter-spacing:0.988px;-webkit-text-stroke:0.3px #f8fafc;">07/11/2025</span>
<span class="t" style="left:352.60px;top:98.30px;font-size:31.3px;color:#f8fafc;letter-spacing:1.847px;-webkit-text-stroke:0.3px #f8fafc;">03:00</span>
<span class="t" style="left:448.70px;top:98.30px;font-size:31.3px;color:#f8fafc;letter-spacing:0.825px;-webkit-text-stroke:0.3px #f8fafc;">PM</span>
<span class="t" style="left:528.70px;top:98.30px;font-size:31.3px;color:#f8fafc;letter-spacing:2.097px;-webkit-text-stroke:0.3px #f8fafc;">04:00</span>
<span class="t" style="left:626.30px;top:98.30px;font-size:31.3px;color:#f8fafc;letter-spacing:1.025px;-webkit-text-stroke:0.3px #f8fafc;">PM</span>
</header>
<nav aria-label="Tabs">
<span class="t" style="left:98.20px;top:248.43px;font-size:23px;color:#94a3b8;letter-spacing:0.547px;-webkit-text-stroke:0.25px #94a3b8;">General</span>
<span class="t" style="left:250.90px;top:248.43px;font-size:23px;color:#f1f5f9;letter-spacing:0.903px;-webkit-text-stroke:0.4px #f1f5f9;">Participants</span>
<span class="t" style="left:450.20px;top:248.43px;font-size:23px;color:#94a3b8;letter-spacing:0.345px;-webkit-text-stroke:0.25px #94a3b8;">Recurrence</span>
</nav>
<main>
<section aria-label="Toolbar">
<span class="t" style="left:194.00px;top:413.02px;font-size:22.3px;color:#64748b;letter-spacing:0.631px;">Search</span>
<span class="t" style="left:763.60px;top:412.95px;font-size:22.5px;color:#f1f5f9;letter-spacing:0.086px;-webkit-text-stroke:0.2px #f1f5f9;">All Responses</span>
<span class="t" style="left:1091.90px;top:412.95px;font-size:22.5px;color:#f1f5f9;letter-spacing:0.478px;-webkit-text-stroke:0.2px #f1f5f9;">All Attendance</span>
<span class="t" style="left:1878.10px;top:406.85px;font-size:22.5px;color:#44516a;letter-spacing:0.788px;-webkit-text-stroke:0.2px #44516a;">Set Attendance</span>
<span class="t" style="left:2254.30px;top:406.85px;font-size:22.5px;color:#ffffff;letter-spacing:0.74px;-webkit-text-stroke:0.7px #fff;">Add</span>
</section>
<section role="table" aria-label="Participants">
<div role="row" aria-label="Header">
<span class="t" style="left:253.00px;top:545.67px;font-size:18.7px;color:#94a3b8;letter-spacing:1.615px;-webkit-text-stroke:0.75px #94a3b8;">Name</span>
<span class="t" style="left:253.00px;top:574.87px;font-size:18.7px;color:#94a3b8;letter-spacing:0.945px;-webkit-text-stroke:0.75px #94a3b8;">DOB/Gender</span>
<span class="t" style="left:637.80px;top:545.67px;font-size:18.7px;color:#94a3b8;letter-spacing:0.668px;-webkit-text-stroke:0.75px #94a3b8;">Comet ID</span>
<span class="t" style="left:636.80px;top:574.87px;font-size:18.7px;color:#94a3b8;letter-spacing:-0.073px;-webkit-text-stroke:0.75px #94a3b8;">FIFA ID</span>
<span class="t" style="left:873.40px;top:545.67px;font-size:18.7px;color:#94a3b8;letter-spacing:1.66px;-webkit-text-stroke:0.75px #94a3b8;">E-mail</span>
<span class="t" style="left:873.40px;top:574.87px;font-size:18.7px;color:#94a3b8;letter-spacing:1.114px;-webkit-text-stroke:0.75px #94a3b8;">Phone</span>
<span class="t" style="left:1483.50px;top:545.67px;font-size:18.7px;color:#94a3b8;letter-spacing:1.381px;-webkit-text-stroke:0.75px #94a3b8;">Active</span>
<span class="t" style="left:1482.50px;top:574.87px;font-size:18.7px;color:#94a3b8;letter-spacing:0.98px;-webkit-text-stroke:0.75px #94a3b8;">Registered</span>
<span class="t" style="left:1722.00px;top:559.97px;font-size:18.7px;color:#94a3b8;letter-spacing:0.949px;-webkit-text-stroke:0.75px #94a3b8;">Response</span>
<span class="t" style="left:1947.10px;top:559.97px;font-size:18.7px;color:#94a3b8;letter-spacing:1.382px;-webkit-text-stroke:0.75px #94a3b8;">Attendance</span>
</div>
<div role="row" aria-label="Edward">
<span class="t" style="left:253.30px;top:634.15px;font-size:22.5px;color:#f1f5f9;letter-spacing:0.665px;-webkit-text-stroke:0.25px #f1f5f9;">Edward</span>
<span class="t" style="left:253.30px;top:675.15px;font-size:22.5px;color:#f1f5f9;letter-spacing:0.022px;-webkit-text-stroke:0.25px #f1f5f9;">25/12/1991 M</span>
<span class="t" style="left:636.80px;top:634.15px;font-size:22.5px;color:#f1f5f9;-webkit-text-stroke:0.25px #f1f5f9;"><span style="letter-spacing:-2.31px">6</span>1</span>
<span class="t" style="left:636.80px;top:675.15px;font-size:22.5px;color:#f1f5f9;-webkit-text-stroke:0.25px #f1f5f9;"><span style="letter-spacing:-0.81px">1</span>M</span>
</div>
<div role="row" aria-label="Scott">
<span class="t" style="left:253.30px;top:735.65px;font-size:22.5px;color:#f1f5f9;letter-spacing:0.895px;-webkit-text-stroke:0.25px #f1f5f9;">Scott</span>
<span class="t" style="left:253.30px;top:776.65px;font-size:22.5px;color:#f1f5f9;letter-spacing:0.785px;-webkit-text-stroke:0.25px #f1f5f9;">17/06/2002 M</span>
<span class="t" style="left:637.80px;top:735.65px;font-size:22.5px;color:#f1f5f9;letter-spacing:0.937px;-webkit-text-stroke:0.25px #f1f5f9;">447</span>
<span class="t" style="left:636.80px;top:776.65px;font-size:22.5px;color:#f1f5f9;-webkit-text-stroke:0.25px #f1f5f9;"><span style="letter-spacing:-2.03px">1</span>9H</span>
</div>
<div role="row" aria-label="Lloyd">
<span class="t" style="left:253.30px;top:837.15px;font-size:22.5px;color:#f1f5f9;letter-spacing:0.606px;-webkit-text-stroke:0.25px #f1f5f9;">Lloyd</span>
<span class="t" style="left:253.30px;top:878.15px;font-size:22.5px;color:#f1f5f9;letter-spacing:0.985px;-webkit-text-stroke:0.25px #f1f5f9;">12/04/2002 M</span>
<span class="t" style="left:637.80px;top:837.15px;font-size:22.5px;color:#f1f5f9;letter-spacing:0.737px;-webkit-text-stroke:0.25px #f1f5f9;">447</span>
<span class="t" style="left:636.80px;top:878.15px;font-size:22.5px;color:#f1f5f9;-webkit-text-stroke:0.25px #f1f5f9;"><span style="letter-spacing:-2.03px">1</span>9H</span>
</div>
<div role="row" aria-label="Jason">
<span class="t" style="left:254.30px;top:938.65px;font-size:22.5px;color:#f1f5f9;letter-spacing:0.618px;-webkit-text-stroke:0.25px #f1f5f9;">Jason</span>
<span class="t" style="left:254.30px;top:979.65px;font-size:22.5px;color:#f1f5f9;letter-spacing:0.849px;-webkit-text-stroke:0.25px #f1f5f9;">02/03/1984 M</span>
<span class="t" style="left:636.80px;top:938.65px;font-size:22.5px;color:#f1f5f9;letter-spacing:1.187px;-webkit-text-stroke:0.25px #f1f5f9;">25</span>
</div>
<div role="row" aria-label="Lee">
<span class="t" style="left:253.30px;top:1040.15px;font-size:22.5px;color:#f1f5f9;letter-spacing:0.487px;-webkit-text-stroke:0.25px #f1f5f9;">Lee</span>
<span class="t" style="left:254.30px;top:1081.15px;font-size:22.5px;color:#f1f5f9;letter-spacing:0.767px;-webkit-text-stroke:0.25px #f1f5f9;">09/04/1985 M</span>
<span class="t" style="left:637.80px;top:1040.15px;font-size:22.5px;color:#f1f5f9;letter-spacing:0.137px;-webkit-text-stroke:0.25px #f1f5f9;">596</span>
<span class="t" style="left:636.80px;top:1081.15px;font-size:22.5px;color:#f1f5f9;-webkit-text-stroke:0.25px #f1f5f9;"><span style="letter-spacing:-1.83px">1</span>9H</span>
<span class="t" style="left:873.30px;top:1040.15px;font-size:22.5px;color:#f1f5f9;letter-spacing:0.894px;-webkit-text-stroke:0.25px #f1f5f9;">lee</span>
<span class="t" style="left:1024.80px;top:1040.15px;font-size:22.5px;color:#f1f5f9;letter-spacing:0.453px;-webkit-text-stroke:0.25px #f1f5f9;">@gmail.com</span>
</div>
<div role="row" aria-label="Leo">
<span class="t" style="left:253.30px;top:1141.65px;font-size:22.5px;color:#f1f5f9;letter-spacing:0.487px;-webkit-text-stroke:0.25px #f1f5f9;">Leo</span>
<span class="t" style="left:254.30px;top:1182.65px;font-size:22.5px;color:#f1f5f9;letter-spacing:0.137px;-webkit-text-stroke:0.25px #f1f5f9;">07/12/2011 M</span>
<span class="t" style="left:637.80px;top:1141.65px;font-size:22.5px;color:#f1f5f9;letter-spacing:1.087px;-webkit-text-stroke:0.25px #f1f5f9;">40</span>
<span class="t" style="left:636.80px;top:1182.65px;font-size:22.5px;color:#f1f5f9;-webkit-text-stroke:0.25px #f1f5f9;"><span style="letter-spacing:-1.51px">1</span>N</span>
</div>
<div role="row" aria-label="Alfie">
<span class="t" style="left:254.30px;top:1243.15px;font-size:22.5px;color:#f1f5f9;letter-spacing:0.561px;-webkit-text-stroke:0.25px #f1f5f9;">Alfie</span>
<span class="t" style="left:253.30px;top:1284.15px;font-size:22.5px;color:#f1f5f9;letter-spacing:1.113px;-webkit-text-stroke:0.25px #f1f5f9;">29/07/2004 M</span>
<span class="t" style="left:636.80px;top:1243.15px;font-size:22.5px;color:#f1f5f9;-webkit-text-stroke:0.25px #f1f5f9;"><span style="letter-spacing:-2.83px">1</span><span style="letter-spacing:-2.83px">1</span>7</span>
<span class="t" style="left:636.80px;top:1284.15px;font-size:22.5px;color:#f1f5f9;-webkit-text-stroke:0.25px #f1f5f9;"><span style="letter-spacing:-2.53px">1</span>9I</span>
<span class="t" style="left:874.30px;top:1243.15px;font-size:22.5px;color:#f1f5f9;letter-spacing:0.859px;-webkit-text-stroke:0.25px #f1f5f9;">alfie</span>
<span class="t" style="left:1055.30px;top:1243.15px;font-size:22.5px;color:#f1f5f9;letter-spacing:0.453px;-webkit-text-stroke:0.25px #f1f5f9;">@gmail.com</span>
</div>
<div role="row" aria-label="Brandon">
<span class="t" style="left:253.30px;top:1344.65px;font-size:22.5px;color:#f1f5f9;letter-spacing:0.641px;-webkit-text-stroke:0.25px #f1f5f9;">Brandon</span>
<span class="t" style="left:253.30px;top:1385.65px;font-size:22.5px;color:#f1f5f9;letter-spacing:0.649px;-webkit-text-stroke:0.25px #f1f5f9;">18/10/2000 M</span>
<span class="t" style="left:636.80px;top:1344.65px;font-size:22.5px;color:#f1f5f9;-webkit-text-stroke:0.25px #f1f5f9;"><span style="letter-spacing:-2.71px">6</span>1</span>
<span class="t" style="left:636.80px;top:1385.65px;font-size:22.5px;color:#f1f5f9;-webkit-text-stroke:0.25px #f1f5f9;"><span style="letter-spacing:-3.31px">1</span>P</span>
</div>
</section>
</main>
<div class="abs sb"></div>
<div class="abs bottombar"></div>
</body>
</html>
